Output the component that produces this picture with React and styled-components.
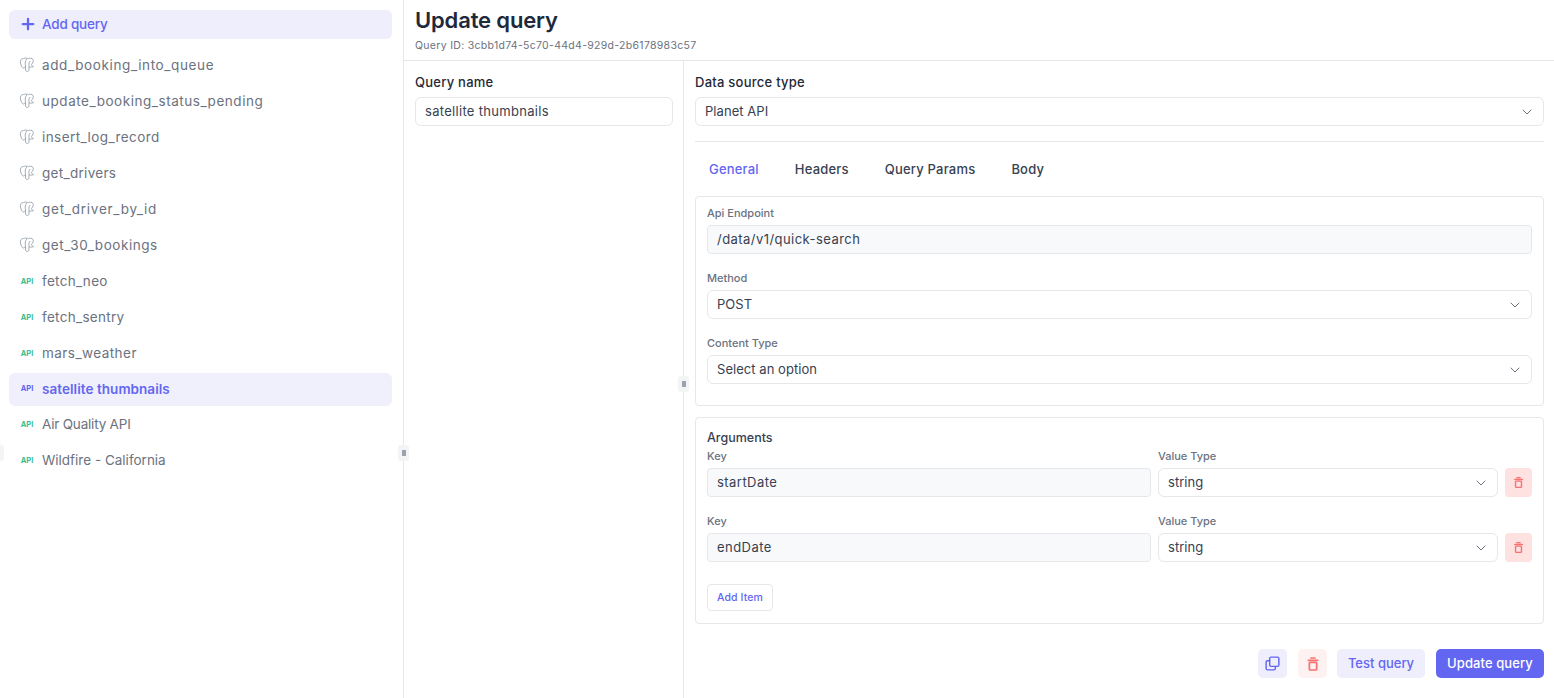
import React from 'react';
import styled, { createGlobalStyle } from 'styled-components';
import { Plus, ChevronDown } from 'lucide-react';

const queries = [
  { name: 'add_booking_into_queue', type: 'pg', tracking: 0.62 },
  { name: 'update_booking_status_pending', type: 'pg', tracking: 0.54 },
  { name: 'insert_log_record', type: 'pg', tracking: 0.42 },
  { name: 'get_drivers', type: 'pg', tracking: 0.3 },
  { name: 'get_driver_by_id', type: 'pg', tracking: 0.75 },
  { name: 'get_30_bookings', type: 'pg', tracking: 0.55 },
  { name: 'fetch_neo', type: 'api', tracking: 0.3 },
  { name: 'fetch_sentry', type: 'api', tracking: 0.3 },
  { name: 'mars_weather', type: 'api', tracking: 0.45 },
  { name: 'satellite thumbnails', type: 'api', active: true, tracking: 0.05 },
  { name: 'Air Quality API', type: 'api', tracking: -0.2 },
  { name: 'Wildfire - California', type: 'api', tracking: 0 },
];

const tabs = ['General', 'Headers', 'Query Params', 'Body'];
const args = ['startDate', 'endDate'];

function ElephantIcon() {
  return (
    <svg width="16" height="16" viewBox="0 0 16 16" fill="none" stroke="#a3adb8" strokeWidth="1" strokeLinejoin="round">
      <path d="M4.5 1.5C2 1.5 1 3.5 1.5 6C2 8.5 3 11 4.5 11C5.5 11 6 10 6.5 9L6.5 13C6.5 14.5 8.5 15 9.5 14C10 13.5 10 11 10 10C11.5 10 13 10.5 14.5 9.5C13 9 12.5 8.5 12.5 7.5C13.5 6 15 4 14 2.5C13 1 11 1 9.5 1.5C8 1 6 1 4.5 1.5Z" />
      <path d="M6.5 9C6 6 6 4 8 2M10 10C10 8 9.5 6 11 4" />
    </svg>
  );
}

function TrashIcon({ size }) {
  return (
    <svg width={size} height={size} viewBox="0 0 24 24" fill="none" stroke="currentColor" strokeWidth="2.6" strokeLinecap="round">
      <path d="M9 3h6M5 6.5h14" />
      <rect x="6.5" y="9.5" width="11" height="11.5" rx="1.5" />
    </svg>
  );
}

function CopyIcon() {
  return (
    <svg width="17" height="17" viewBox="0 0 24 24" fill="none" stroke="currentColor" strokeWidth="2" strokeLinecap="round" strokeLinejoin="round">
      <rect x="8" y="3" width="13" height="13" rx="2" />
      <path d="M8 8H5a2 2 0 0 0-2 2v9a2 2 0 0 0 2 2h9a2 2 0 0 0 2-2v-3" />
    </svg>
  );
}

function Select({ value }) {
  return (
    <SelectBox>
      <span>{value}</span>
      <ChevronDown size={16} color="#6b7280" strokeWidth={1.5} />
    </SelectBox>
  );
}

export default function App() {
  return (
    <Page>
      <GlobalStyle />
      <EdgeTab />
      <Sidebar>
        <AddQuery>
          <Plus size={18} strokeWidth={3} />
          Add query
        </AddQuery>
        <QueryList>
          {queries.map(q => (
            <QueryRow key={q.name} $active={q.active} $tracking={q.tracking}>
              <IconSlot>
                {q.type === 'pg' ? <ElephantIcon /> : <ApiTag $active={q.active}>API</ApiTag>}
              </IconSlot>
              {q.name}
            </QueryRow>
          ))}
        </QueryList>
        <SideHandle>
          <Grip />
        </SideHandle>
      </Sidebar>

      <Main>
        <Header>
          <Title>Update query</Title>
          <QueryId>Query ID: 3cbb1d74-5c70-44d4-929d-2b6178983c57</QueryId>
        </Header>

        <Columns>
          <NameColumn>
            <FieldLabel>Query name</FieldLabel>
            <NameInput>satellite thumbnails</NameInput>
            <ColumnHandle>
              <Grip />
            </ColumnHandle>
          </NameColumn>

          <FormColumn>
            <FieldLabel>Data source type</FieldLabel>
            <Select value="Planet API" />
            <Divider />
            <Tabs>
              {tabs.map((t, i) => (
                <Tab key={t} $active={i === 0}>
                  {t}
                </Tab>
              ))}
            </Tabs>

            <Panel>
              <SmallLabel>Api Endpoint</SmallLabel>
              <GreyInput>/data/v1/quick-search</GreyInput>
              <Gap />
              <SmallLabel>Method</SmallLabel>
              <Select value="POST" />
              <Gap />
              <SmallLabel>Content Type</SmallLabel>
              <Select value="Select an option" />
            </Panel>

            <ArgsPanel>
              <ArgsTitle>Arguments</ArgsTitle>
              {args.map(a => (
                <ArgRow key={a}>
                  <div>
                    <SmallLabel>Key</SmallLabel>
                    <GreyInput>{a}</GreyInput>
                  </div>
                  <div>
                    <SmallLabel>Value Type</SmallLabel>
                    <Select value="string" />
                  </div>
                  <DeleteArg>
                    <TrashIcon size={13} />
                  </DeleteArg>
                </ArgRow>
              ))}
              <AddItem>Add Item</AddItem>
            </ArgsPanel>

            <Footer>
              <CopyButton>
                <CopyIcon />
              </CopyButton>
              <TrashButton>
                <TrashIcon size={16} />
              </TrashButton>
              <TestButton>Test query</TestButton>
              <UpdateButton>Update query</UpdateButton>
            </Footer>
          </FormColumn>
        </Columns>
      </Main>
    </Page>
  );
}

const GlobalStyle = createGlobalStyle`
  * {
    box-sizing: border-box;
  }

  body {
    margin: 0;
    background: #fff;
    font-family: Inter, 'Open Sans', sans-serif;
    color: #1f2937;
  }
`;

const Page = styled.div`
  display: flex;
  height: 698px;
  overflow: hidden;
  position: relative;
`;

const EdgeTab = styled.div`
  position: absolute;
  left: 0;
  top: 445px;
  width: 4px;
  height: 16px;
  background: #f3f4f6;
  border-radius: 0 3px 3px 0;
`;

const Sidebar = styled.aside`
  position: relative;
  width: 404px;
  flex-shrink: 0;
  padding: 10px 11px 0 9px;
  border-right: 1px solid #e5e7eb;
`;

const AddQuery = styled.div`
  display: flex;
  align-items: center;
  gap: 5px;
  height: 29px;
  padding: 0 0 2px 10px;
  border-radius: 6px;
  background: #eeeefc;
  color: #6366f1;
  font-size: 13.5px;
  font-weight: 450;
  letter-spacing: -0.2px;
`;

const QueryList = styled.div`
  display: flex;
  flex-direction: column;
  margin-top: 8px;
`;

const QueryRow = styled.div`
  display: flex;
  align-items: center;
  height: ${p => (p.$active ? '33px' : '36px')};
  margin-top: ${p => (p.$active ? '2px' : '0')};
  padding-bottom: ${p => (p.$active ? '2px' : '0')};
  border-radius: 6px;
  background: ${p => (p.$active ? '#f0f0fd' : 'transparent')};
  color: ${p => (p.$active ? '#6366f1' : '#6b7280')};
  font-size: 13.5px;
  font-weight: ${p => (p.$active ? 600 : 400)};
  letter-spacing: ${p => p.$tracking}px;
`;

const IconSlot = styled.span`
  display: flex;
  justify-content: center;
  width: 33px;
  padding-left: 3px;
  letter-spacing: 0;
`;

const ApiTag = styled.span`
  color: ${p => (p.$active ? '#6366f1' : '#3dbd8f')};
  font-size: 7.5px;
  font-weight: 700;
`;

const SideHandle = styled.div`
  position: absolute;
  right: -6px;
  top: 445px;
  display: flex;
  align-items: center;
  justify-content: center;
  width: 11px;
  height: 16px;
  border-radius: 3px;
  background: #f3f4f6;
`;

const Grip = styled.span`
  width: 4px;
  height: 6px;
  background-image: radial-gradient(#9ca3af 0.8px, transparent 0.9px);
  background-size: 2px 2px;
`;

const Main = styled.main`
  display: flex;
  flex-direction: column;
  flex: 1;
  min-width: 0;
`;

const Header = styled.header`
  height: 61px;
  padding: 6px 11px 0;
  border-bottom: 1px solid #e5e7eb;
`;

const Title = styled.h1`
  margin: 0;
  color: #1e293b;
  font-size: 22px;
  line-height: 28px;
  font-weight: 600;
  letter-spacing: -0.15px;
`;

const QueryId = styled.div`
  margin-top: 5px;
  color: #6b7280;
  font-size: 10.5px;
  line-height: 14px;
  letter-spacing: 0.3px;
`;

const Columns = styled.div`
  display: flex;
  flex: 1;
  min-height: 0;
`;

const NameColumn = styled.section`
  position: relative;
  width: 280px;
  flex-shrink: 0;
  padding: 13px 10px 0 11px;
  border-right: 1px solid #e5e7eb;
`;

const ColumnHandle = styled.div`
  position: absolute;
  right: -6px;
  top: 315px;
  display: flex;
  align-items: center;
  justify-content: center;
  width: 11px;
  height: 16px;
  border-radius: 3px;
  background: #f3f4f6;
`;

const FormColumn = styled.section`
  flex: 1;
  min-width: 0;
  padding: 13px 10px 0 11px;
`;

const FieldLabel = styled.div`
  margin-bottom: 6px;
  color: #1f2937;
  font-size: 13px;
  line-height: 17px;
  font-weight: 450;
  letter-spacing: 0.25px;
`;

const NameInput = styled.div`
  display: flex;
  align-items: center;
  height: 29px;
  padding: 0 9px 2px;
  border: 1px solid #e5e7eb;
  border-radius: 6px;
  color: #374151;
  font-size: 13px;
  letter-spacing: 0.3px;
`;

const SelectBox = styled.div`
  display: flex;
  align-items: center;
  justify-content: space-between;
  height: 29px;
  padding: 0 8px 2px 9px;
  border: 1px solid #e5e7eb;
  border-radius: 6px;
  background: #fff;
  color: #374151;
  font-size: 13px;
  letter-spacing: 0.05px;

  svg {
    margin-top: 2px;
  }
`;

const Divider = styled.div`
  height: 1px;
  margin: 15px 0 0;
  background: #e5e7eb;
`;

const Tabs = styled.div`
  display: flex;
  gap: 36px;
  align-items: center;
  height: 54px;
  padding-left: 14px;
`;

const Tab = styled.span`
  color: ${p => (p.$active ? '#6366f1' : '#374151')};
  font-size: 13px;
  font-weight: 450;
  letter-spacing: 0.2px;
`;

const Panel = styled.div`
  height: 210px;
  padding: 10px 11px 0;
  border: 1px solid #e5e7eb;
  border-radius: 4px;
`;

const ArgsPanel = styled.div`
  height: 207px;
  margin-top: 11px;
  padding: 12px 11px 0;
  border: 1px solid #e5e7eb;
  border-radius: 4px;
`;

const SmallLabel = styled.div`
  margin-bottom: 5px;
  color: #6b7280;
  font-size: 11px;
  line-height: 13px;
  font-weight: 450;
`;

const GreyInput = styled.div`
  display: flex;
  align-items: center;
  height: 29px;
  padding: 0 9px 2px;
  border: 1px solid #e5e7eb;
  border-radius: 4px;
  background: #f8f9fb;
  color: #374151;
  font-size: 13px;
  letter-spacing: 0.45px;
`;

const Gap = styled.div`
  height: 18px;
`;

const ArgsTitle = styled.div`
  margin-bottom: 4px;
  color: #374151;
  font-size: 12.5px;
  line-height: 16px;
  font-weight: 450;
`;

const ArgRow = styled.div`
  display: grid;
  grid-template-columns: 444px 340px 27px;
  gap: 7px;
  align-items: end;
  margin-bottom: 18px;
`;

const DeleteArg = styled.button`
  display: flex;
  align-items: center;
  justify-content: center;
  height: 29px;
  padding: 0;
  border: none;
  border-radius: 4px;
  background: #fee2e2;
  color: #f87171;
`;

const AddItem = styled.button`
  display: block;
  width: 66px;
  height: 27px;
  margin-top: 22px;
  padding: 0;
  border: 1px solid #e5e7eb;
  border-radius: 4px;
  background: #fff;
  color: #6366f1;
  font-family: inherit;
  font-size: 10.5px;
  font-weight: 450;
  letter-spacing: 0.1px;
`;

const Footer = styled.div`
  display: flex;
  justify-content: flex-end;
  margin-top: 25px;
`;

const IconButton = styled.button`
  display: flex;
  align-items: center;
  justify-content: center;
  width: 29px;
  height: 29px;
  padding: 0;
  border: none;
  border-radius: 5px;
`;

const CopyButton = styled(IconButton)`
  background: #eeeefc;
  color: #6366f1;
  margin-right: 11px;
`;

const TrashButton = styled(IconButton)`
  background: #fef1f1;
  color: #f87171;
  margin-right: 10px;
`;

const TestButton = styled.button`
  width: 88px;
  height: 29px;
  margin-right: 11px;
  padding: 0 0 1px;
  border: none;
  border-radius: 5px;
  background: #eeeefc;
  color: #6366f1;
  font-family: inherit;
  font-size: 13px;
  font-weight: 450;
`;

const UpdateButton = styled.button`
  width: 108px;
  height: 29px;
  padding: 0 0 1px;
  border: none;
  border-radius: 5px;
  background: #6366f1;
  color: #fff;
  font-family: inherit;
  font-size: 13px;
  font-weight: 500;
  letter-spacing: 0.1px;
`;
